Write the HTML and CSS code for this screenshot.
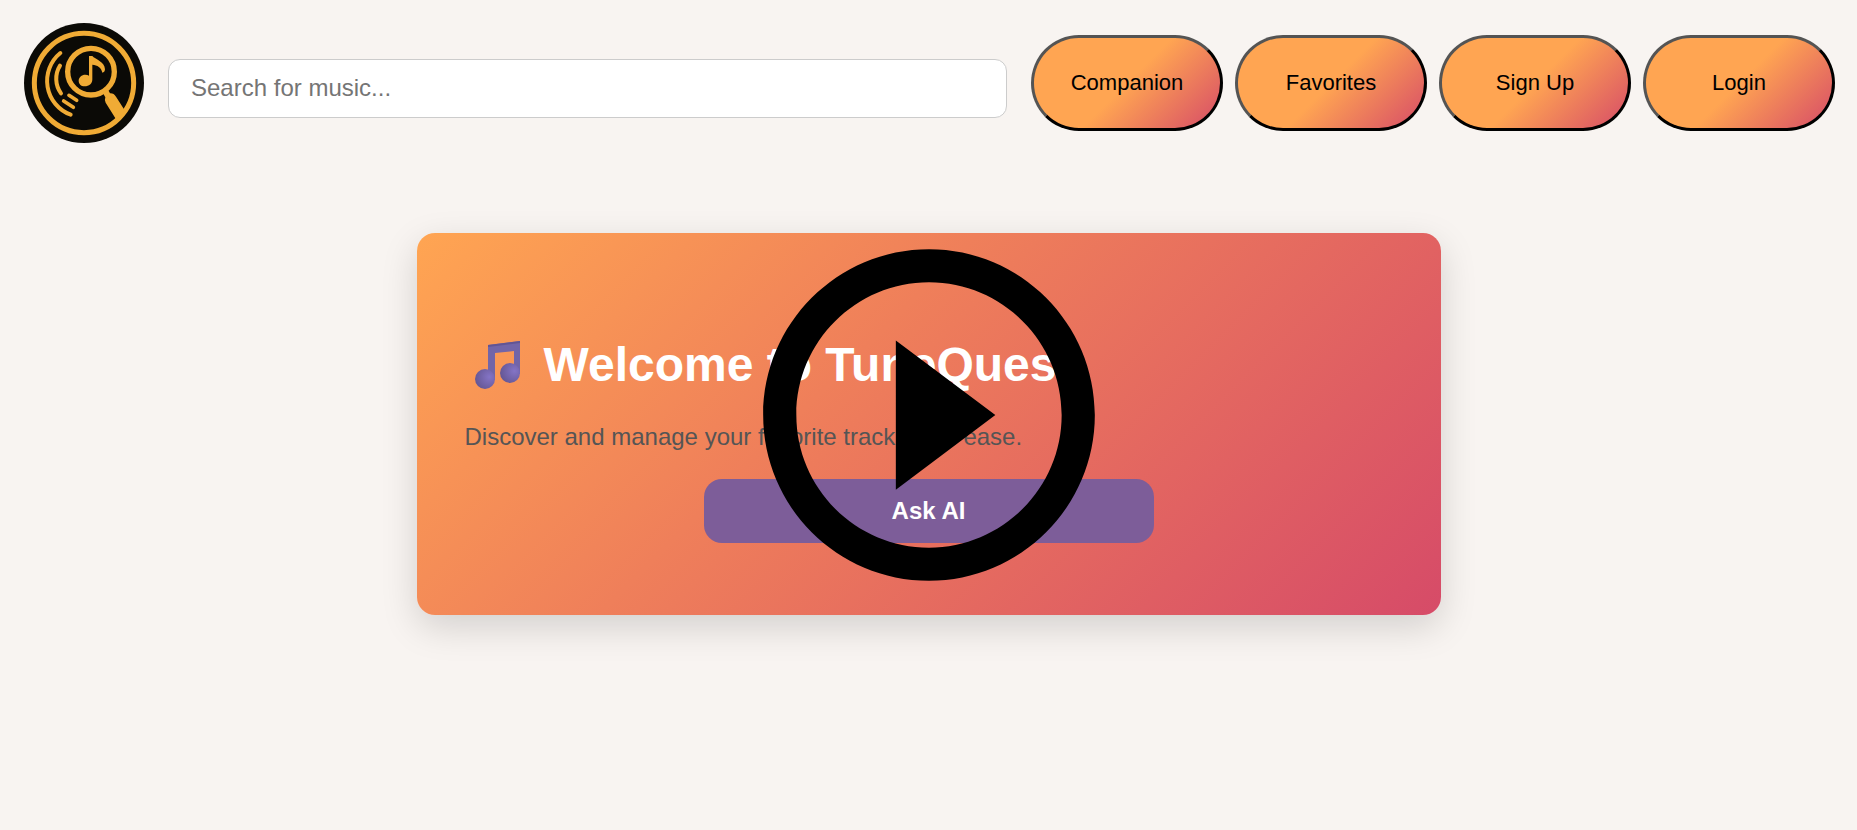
FILE: index.html
```html
<!DOCTYPE html>
<html lang="en">
<head>
<meta charset="utf-8">
<meta name="viewport" content="width=device-width, initial-scale=1">
<title>TuneQuest</title>
<link rel="stylesheet" href="styles.css">
</head>
<body>
<header class="header">
  <a class="logo" href="#" aria-label="TuneQuest home">
    <svg class="logo-image" viewBox="42 39 360 360" aria-hidden="true">
      <circle cx="222" cy="219" r="180" fill="#0b0a06"/>
      <g fill="none" stroke="#f0ab35" stroke-linecap="round">
        <circle cx="222" cy="219" r="149" stroke-width="15"/>
        <circle cx="243" cy="185" r="70" stroke-width="16"/>
        <path d="M151 129A108 108 0 0 0 182 314" stroke-width="12"/>
        <path d="M150 167A74 74 0 0 0 153 250" stroke-width="12"/>
        <path d="M177 256L200 271M161 273L190 292" stroke-width="11"/>
      </g>
      <path d="M237 138H247C255 148 284 154 285 178Q284 188 277 188C274 172 262 165 247 164V208C247 222 237 229 224 229C212 229 206 221 206 212C206 202 215 194 226 194Q233 194 237 197Z" fill="#f0ab35"/>
      <path d="M279 250L295 241L300 250Q311 249 318 260L345 302L320 331L287 278Q283 269 286 262Z" fill="#f0ab35"/>
    </svg>
  </a>
  <input class="search" type="search" placeholder="Search for music..." aria-label="Search for music">
  <nav class="nav">
    <button class="nav-button" type="button">Companion</button>
    <button class="nav-button" type="button">Favorites</button>
    <button class="nav-button" type="button">Sign Up</button>
    <button class="nav-button" type="button">Login</button>
  </nav>
</header>
<main class="hero">
  <h1 class="hero-title">
    <svg class="hero-note" viewBox="0 0 66 54" aria-hidden="true">
      <defs>
        <radialGradient id="head" cx=".72" cy=".4" r=".7"><stop offset="0" stop-color="#8474c6"/><stop offset="1" stop-color="#665896"/></radialGradient>
      </defs>
      <path d="M23 7L55 3V36H49V13L30 15V42H23Z" fill="#7265a8"/>
      <path d="M23 7L55 3V5L23 9Z" fill="#625594"/>
      <circle cx="20" cy="41" r="10" fill="url(#head)"/>
      <circle cx="45" cy="35" r="10" fill="url(#head)"/>
    </svg>
    <span>Welcome to TuneQuest</span>
  </h1>
  <p class="hero-text">Discover and manage your favorite tracks with ease.</p>
  <button class="ask-button" type="button">Ask AI</button>
</main>
<button class="play" type="button" aria-label="Play">
  <svg class="play-icon" viewBox="0 0 24 24" aria-hidden="true">
    <path d="M10 16.5l6-4.5-6-4.5v9zM12 2C6.48 2 2 6.48 2 12s4.48 10 10 10 10-4.48 10-10S17.52 2 12 2zm0 18c-4.41 0-8-3.59-8-8s3.59-8 8-8 8 3.59 8 8-3.59 8-8 8z"/>
  </svg>
</button>
</body>
</html>
```
FILE: styles.css
```css
* {
  box-sizing: border-box;
}

body {
  margin: 0;
  background: #f8f4f1;
  font-family: "Liberation Sans", Arial, sans-serif;
  font-size: 24px;
}

button,
input {
  font-family: inherit;
}

.header {
  display: flex;
  align-items: center;
  gap: 24px;
  padding: 23px 22px 23px 24px;
}

.logo,
.logo-image {
  display: block;
  width: 120px;
  height: 120px;
}

.search {
  flex: 1;
  min-width: 0;
  margin: 11px 0 0;
  padding: 14px 22px 16px;
  border: 1px solid #ccc;
  border-radius: 12px;
  background: #fff;
  font-size: 24px;
  line-height: 27px;
  appearance: none;
}

.search::placeholder {
  color: #757575;
}

.nav {
  display: flex;
  gap: 12px;
}

.nav-button {
  width: 192px;
  height: 96px;
  padding: 0;
  border: 3px outset #000;
  border-radius: 48px;
  background: linear-gradient(135deg, #ffa552 50%, #d64b68);
  color: #000;
  font-size: 22px;
}

.hero {
  width: calc(100% - 48px);
  max-width: 1024px;
  margin: 67px auto;
  padding: 104px 48px 72px;
  border-radius: 18px;
  background: linear-gradient(135deg, #ffa552, #ef7f5a 40%, #d64b68);
  box-shadow: 0 12px 36px rgba(0, 0, 0, 0.15);
}

.hero-title {
  display: flex;
  align-items: center;
  gap: 13px;
  margin: 0 0 30px;
  color: #fff;
  font-size: 48px;
  line-height: 56px;
}

.hero-note {
  width: 66px;
  height: 54px;
}

.hero-text {
  margin: 0 0 28px;
  color: #555;
  line-height: 28px;
}

.ask-button {
  display: block;
  width: 100%;
  max-width: 450px;
  height: 64px;
  margin: 0 auto;
  border: 0;
  border-radius: 18px;
  background: #7d5d99;
  color: #fff;
  font-size: 24px;
  font-weight: 700;
}

.play {
  position: fixed;
  inset: 0;
  width: 398px;
  height: 398px;
  margin: auto;
  padding: 0;
  border: 0;
  background: none;
}

.play-icon {
  display: block;
  width: 100%;
}
```
